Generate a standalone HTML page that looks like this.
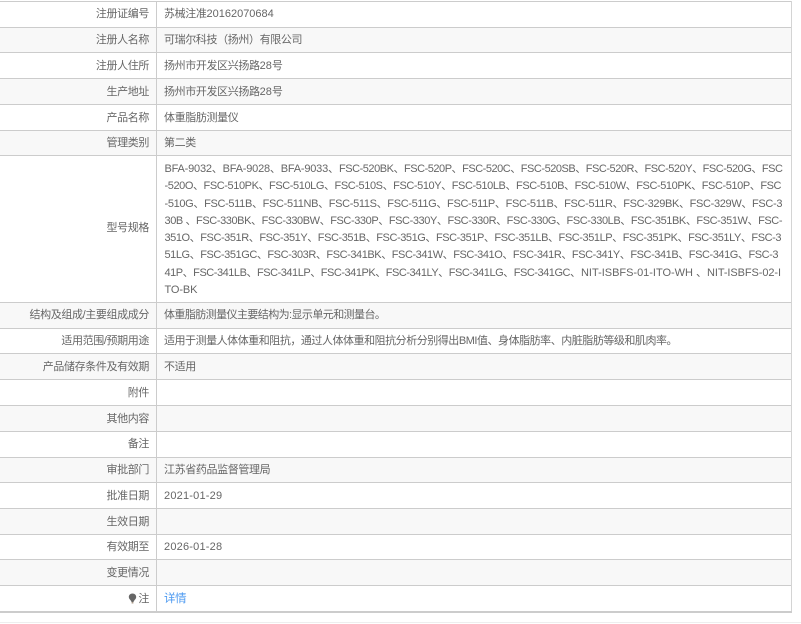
<!DOCTYPE html>
<html>
<head>
<meta charset="utf-8">
<style>
html,body{margin:0;padding:0;background:#fff;}
body{width:801px;height:624px;position:relative;overflow:hidden;font-family:"Liberation Sans","Noto Sans CJK SC",sans-serif;font-size:11px;color:#666;}
.r{position:absolute;left:0;width:791px;border-bottom:1px solid #ccc;box-sizing:content-box;}
.g{background:#f8f8f8;}
.l,.v{position:absolute;top:0;white-space:nowrap;line-height:25px;letter-spacing:-0.38px;}
.d .l,.d .v{top:1px;}
.l{right:642px;text-align:right;}
.v{left:164px;}
.n{letter-spacing:0;}
.t{letter-spacing:0.2px;}
#vl{position:absolute;left:156px;top:1px;width:1px;height:611px;background:#ccc;}
#rb{position:absolute;left:791px;top:1px;width:1px;height:612px;background:#d4d4d4;}
#tb{position:absolute;left:0;top:1px;width:792px;height:1px;background:#ccc;}
#bb{position:absolute;left:0;top:611px;width:792px;height:2px;background:#ccc;}
#ft{position:absolute;left:0;top:622px;width:801px;height:1px;background:#eee;}
#ms{position:absolute;left:0;top:0;}
#ms text{font-family:"Liberation Sans","Noto Sans CJK SC",sans-serif;font-size:11px;fill:#666;}
a{color:#4a98f0;text-decoration:none;font-size:11.500px;}
</style>
</head>
<body>
<div class="r" style="top:2px;height:25px"><div class="l">注册证编号</div><div class="v">苏械注准<span class="n">20162070684</span></div></div>
<div class="r g" style="top:28px;height:24px"><div class="l">注册人名称</div><div class="v">可瑞尔科技（扬州）有限公司</div></div>
<div class="r d" style="top:53px;height:25px"><div class="l">注册人住所</div><div class="v">扬州市开发区兴扬路<span class="n">28</span>号</div></div>
<div class="r g d" style="top:79px;height:25px"><div class="l">生产地址</div><div class="v">扬州市开发区兴扬路<span class="n">28</span>号</div></div>
<div class="r d" style="top:105px;height:25px"><div class="l">产品名称</div><div class="v">体重脂肪测量仪</div></div>
<div class="r g" style="top:131px;height:24px"><div class="l">管理类别</div><div class="v">第二类</div></div>
<div class="r" style="top:156px;height:146px"><div class="l" style="line-height:144px">型号规格</div></div>
<div class="r g" style="top:303px;height:25px"><div class="l">结构及组成/主要组成成分</div><div class="v" style="letter-spacing:-0.58px">体重脂肪测量仪主要结构为:显示单元和测量台。</div></div>
<div class="r" style="top:329px;height:24px"><div class="l">适用范围/预期用途</div><div class="v" style="letter-spacing:-0.47px">适用于测量人体体重和阻抗，通过人体体重和阻抗分析分别得出BMI值、身体脂肪率、内脏脂肪等级和肌肉率。</div></div>
<div class="r g d" style="top:354px;height:25px"><div class="l">产品储存条件及有效期</div><div class="v">不适用</div></div>
<div class="r d" style="top:380px;height:25px"><div class="l">附件</div></div>
<div class="r g d" style="top:406px;height:25px"><div class="l">其他内容</div></div>
<div class="r" style="top:432px;height:25px"><div class="l">备注</div></div>
<div class="r g" style="top:458px;height:24px"><div class="l">审批部门</div><div class="v">江苏省药品监督管理局</div></div>
<div class="r d" style="top:483px;height:25px"><div class="l">批准日期</div><div class="v t">2021-01-29</div></div>
<div class="r g d" style="top:509px;height:25px"><div class="l">生效日期</div></div>
<div class="r" style="top:535px;height:24px"><div class="l">有效期至</div><div class="v t">2026-01-28</div></div>
<div class="r g d" style="top:560px;height:25px"><div class="l">变更情况</div></div>
<div class="r d" style="top:586px;height:25px;border-bottom:0"><div class="l">注</div><div class="v"><a>详情</a></div>
<svg style="position:absolute;left:128px;top:7px" width="9" height="11" viewBox="0 0 9 11"><path d="M4.5 .5C2.3 .5 .8 2 .8 4c0 1.600 1.200 2.500 2 3.600L3.600 9h1.800l.8-1.400C7 6.500 8.200 5.600 8.200 4 8.200 2 6.700 .5 4.500 .5z" fill="#666"/><rect x="3.600" y="9" width="1.800" height="1.500" fill="#a98"/></svg></div>
<div id="tb"></div><div id="vl"></div><div id="rb"></div><div id="bb"></div><div id="ft"></div>
<svg id="ms" width="801" height="624">
<text x="164.500" y="172" textLength="174.500">BFA-9032、BFA-9028、BFA-9033、</text>
<text x="339" y="172" textLength="444">FSC-520BK、FSC-520P、FSC-520C、FSC-520SB、FSC-520R、FSC-520Y、FSC-520G、FSC</text>
<text x="164.500" y="189" textLength="617">-520O、FSC-510PK、FSC-510LG、FSC-510S、FSC-510Y、FSC-510LB、FSC-510B、FSC-510W、FSC-510PK、FSC-510P、FSC</text>
<text x="164.500" y="207" textLength="618">-510G、FSC-511B、FSC-511NB、FSC-511S、FSC-511G、FSC-511P、FSC-511B、FSC-511R、FSC-329BK、FSC-329W、FSC-3</text>
<text x="164.500" y="224" textLength="618">30B 、FSC-330BK、FSC-330BW、FSC-330P、FSC-330Y、FSC-330R、FSC-330G、FSC-330LB、FSC-351BK、FSC-351W、FSC-</text>
<text x="164.500" y="241" textLength="617">351O、FSC-351R、FSC-351Y、FSC-351B、FSC-351G、FSC-351P、FSC-351LB、FSC-351LP、FSC-351PK、FSC-351LY、FSC-3</text>
<text x="164.500" y="258" textLength="614">51LG、FSC-351GC、FSC-303R、FSC-341BK、FSC-341W、FSC-341O、FSC-341R、FSC-341Y、FSC-341B、FSC-341G、FSC-3</text>
<text x="164.500" y="276" textLength="416.500">41P、FSC-341LB、FSC-341LP、FSC-341PK、FSC-341LY、FSC-341LG、FSC-341GC、</text>
<text x="581" y="276" textLength="126">NIT-ISBFS-01-ITO-WH 、</text>
<text x="707" y="276" textLength="74">NIT-ISBFS-02-I</text>
<text x="164.500" y="293" textLength="33">TO-BK</text>
</svg>
</body>
</html>
